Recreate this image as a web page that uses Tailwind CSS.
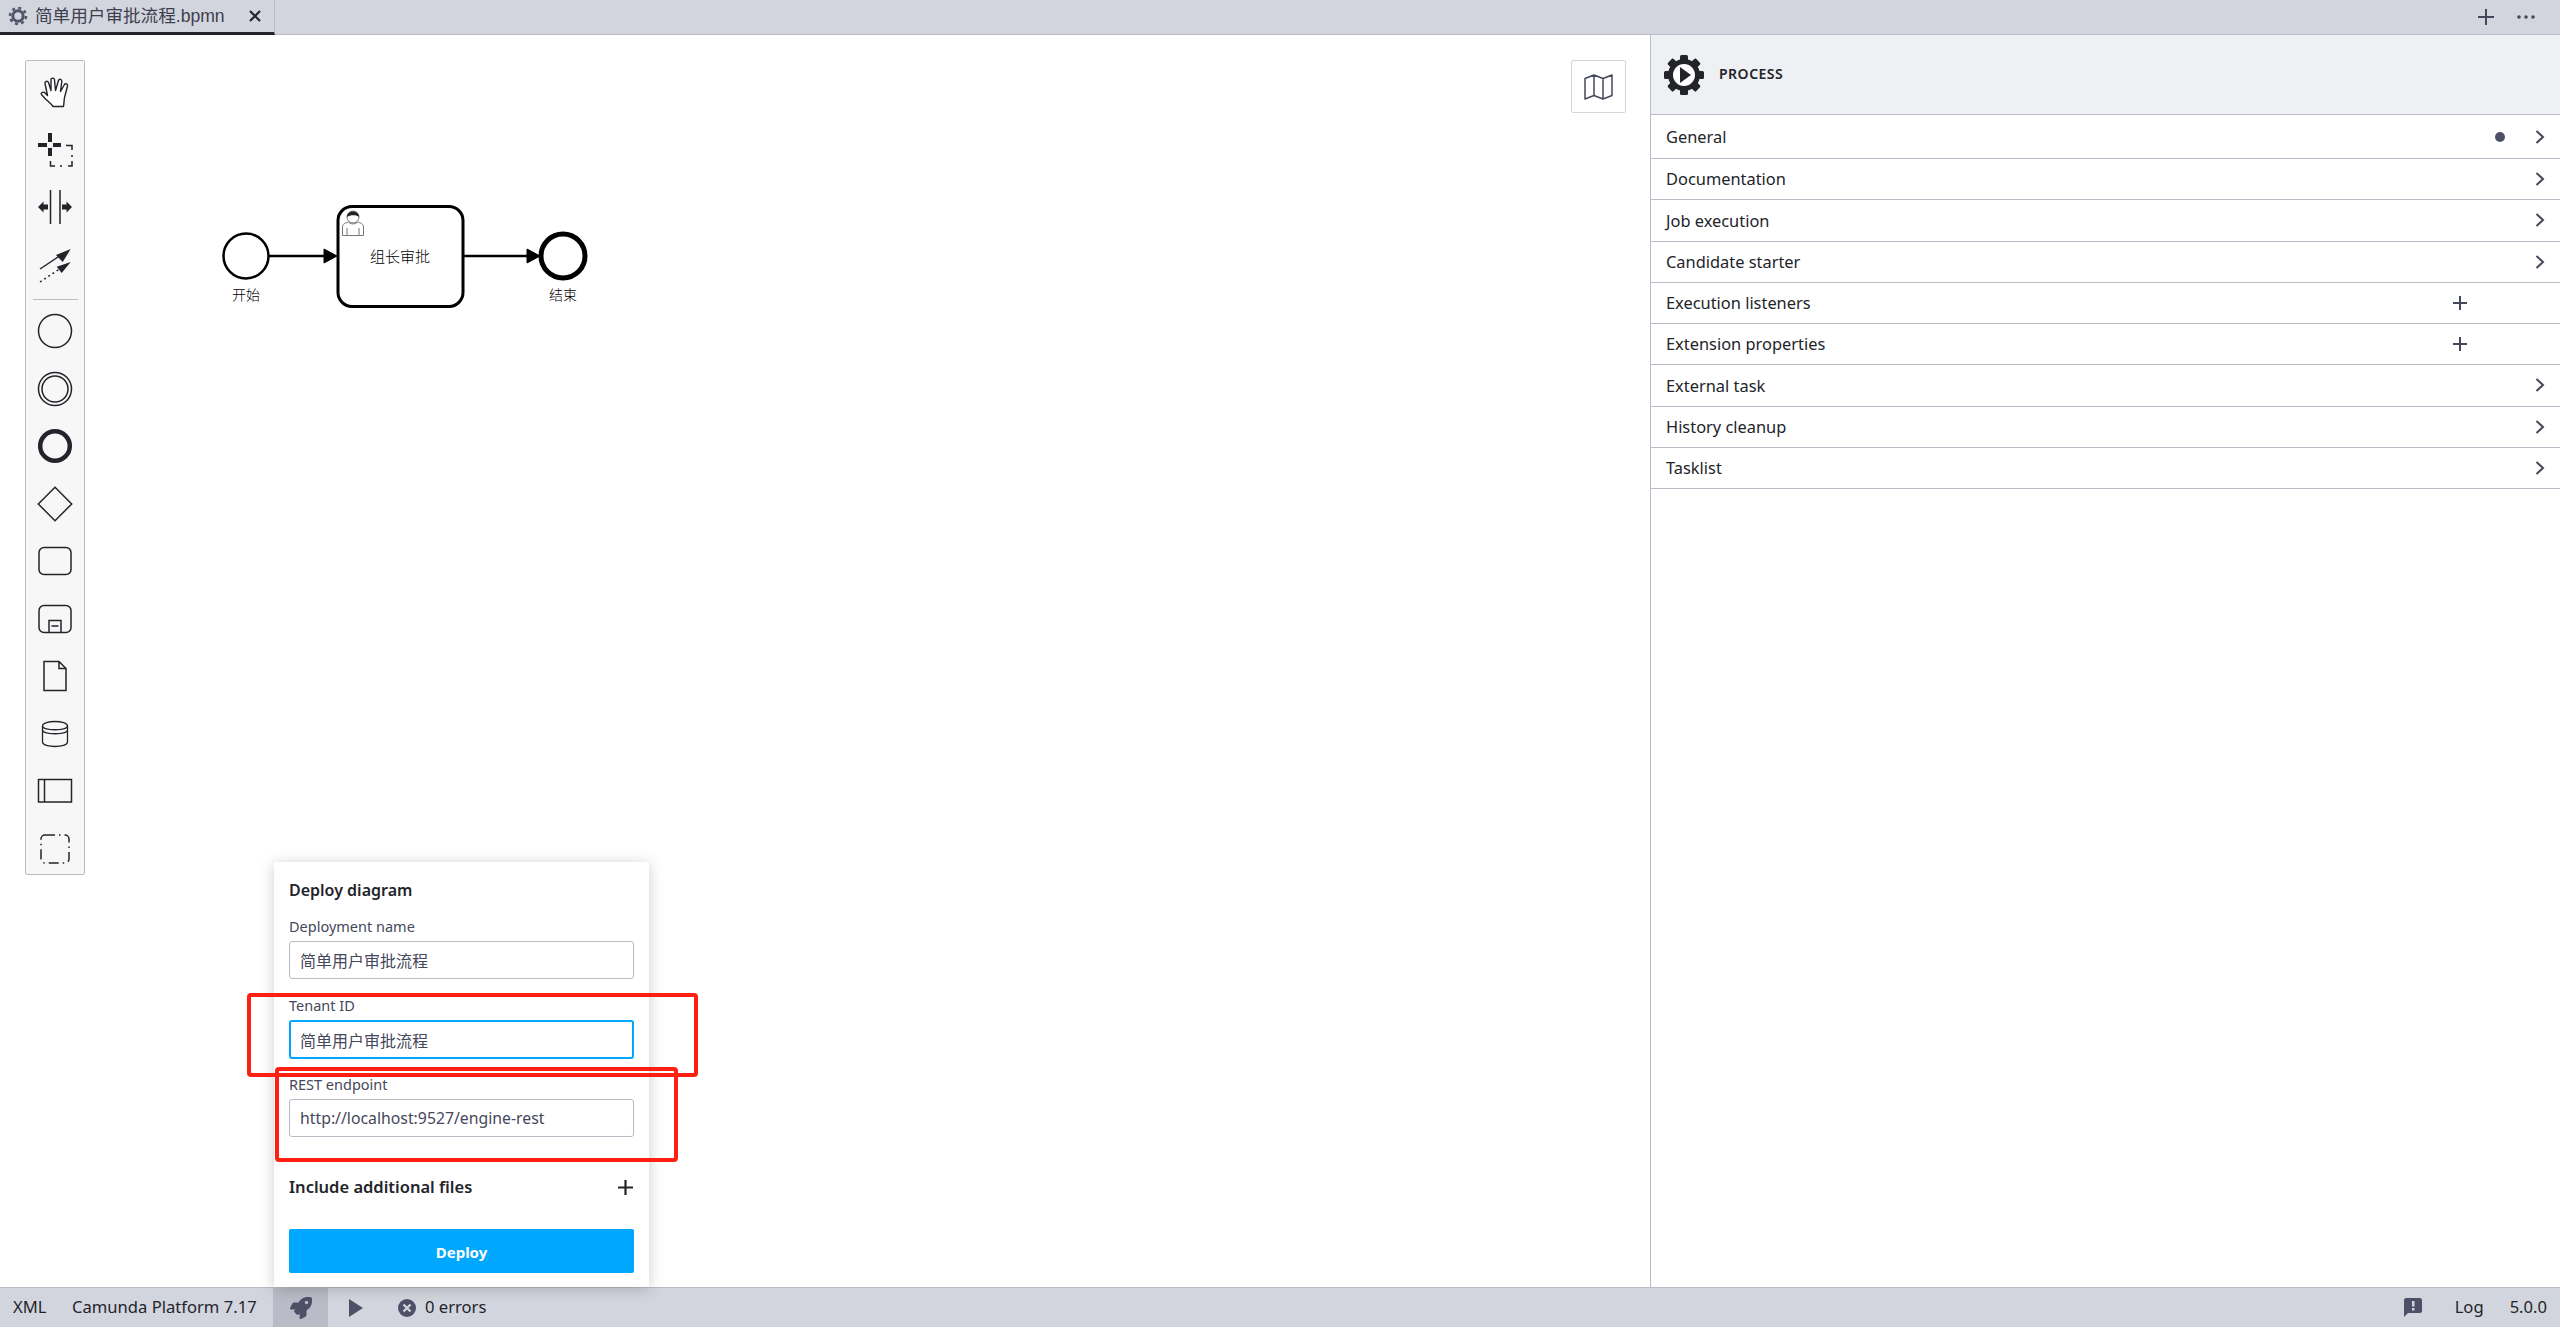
<!DOCTYPE html>
<html lang="en">
<head>
  <meta charset="UTF-8">
  <title>简单用户审批流程.bpmn</title>
  <script src="https://cdn.jsdelivr.net/npm/@tailwindcss/browser@4"></script>
</head>
<body class="h-screen overflow-hidden bg-white text-[#22242a] font-['Noto_Sans','Noto_Sans_CJK_SC',sans-serif]">
<div class="relative flex flex-col h-[1327px] w-[2560px]">

  <!-- tabs -->
  <div class="flex items-stretch justify-between h-[35px] bg-[#d3d5de] border-b border-[#b9bcc6]">
    <div class="flex items-center w-[275px] h-[35px] border-b-[3px] border-r border-b-[#22242a] border-r-[#b9bcc6] pl-[8px] pr-[13px]">
      <svg class="w-[20px] h-[20px] mr-[7px]" viewBox="0 0 20 20">
        <circle cx="10" cy="10" r="5.2" fill="none" stroke="#52566b" stroke-width="3"/>
        <circle cx="10" cy="10" r="8" fill="none" stroke="#52566b" stroke-width="2.6" stroke-dasharray="3 3.28"/>
      </svg>
      <span class="text-[17.6px] text-[#3d404d] font-['Liberation_Sans','Noto_Sans_CJK_SC',sans-serif] whitespace-nowrap">简单用户审批流程.bpmn</span>
      <svg class="ml-auto w-[12px] h-[12px]" viewBox="0 0 12 12"><path d="M1 1L11 11M11 1L1 11" stroke="#22242a" stroke-width="2.2"/></svg>
    </div>
    <div class="flex items-center">
      <svg class="w-[16px] h-[16px] mr-[23px]" viewBox="0 0 16 16"><path d="M8 0V16M0 8H16" stroke="#45485a" stroke-width="2"/></svg>
      <svg class="w-[18px] h-[6px] mr-[25px]" viewBox="0 0 18 6"><circle cx="2" cy="3" r="1.8" fill="#45485a"/><circle cx="9" cy="3" r="1.8" fill="#45485a"/><circle cx="16" cy="3" r="1.8" fill="#45485a"/></svg>
    </div>
  </div>

  <div class="flex flex-1 min-h-0">
    <!-- canvas -->
    <div class="relative flex-1">
      <!-- palette -->
      <div class="absolute left-[25px] top-[25px] w-[60px] h-[815px] bg-[#f7f7f8] border border-[#b9bcc6] rounded-[2px] flex flex-col items-center pt-[2.5px]">
        <div class="h-[57.5px] shrink-0 flex items-center">
          <svg class="w-[40px] h-[40px]" viewBox="0 0 40 40"><path transform="translate(5 5.5)" d="M13 29C11 26 8 24 5 21L1.5 17C.5 15.5 2.5 14 4.5 15L7.5 18L5 6C4.5 3.5 7.5 3 8.5 5L11 13L11 2.5C11 0 14.5 0 14.5 2.5L15.5 13L18.5 3C19.2 1 22 1.5 21.8 4L20.5 14L24.5 7C25.5 5.5 28 6.5 27.5 8.5L24.5 20C24 23 24 26 23.5 29Z" fill="#fff" stroke="#22242a" stroke-width="1.4" stroke-linejoin="round"/></svg>
        </div>
        <div class="h-[57.5px] shrink-0 flex items-center">
          <svg class="w-[40px] h-[40px]" viewBox="0 0 40 40"><path d="M3 15H12M18 15H26M15 3V12M15 18V26" stroke="#22242a" stroke-width="4"/><path d="M31 15.5H37V20M37 25V27M37 31V36H33M27 36H25M20 36H15.5V31" fill="none" stroke="#22242a" stroke-width="1.5"/></svg>
        </div>
        <div class="h-[57.5px] shrink-0 flex items-center">
          <svg class="w-[40px] h-[40px]" viewBox="0 0 40 40"><path d="M15.5 3V37M25 3V37" stroke="#22242a" stroke-width="1.5"/><path d="M3 20L8.500 14.500V17.500H13V22.500H8.500V25.500ZM37 20L31.500 14.500V17.500H27V22.500H31.500V25.500Z" fill="#22242a"/></svg>
        </div>
        <div class="h-[57.5px] shrink-0 flex items-center">
          <svg class="w-[40px] h-[40px]" viewBox="0 0 40 40"><path d="M5 24L26 10" stroke="#22242a" stroke-width="1.5"/><path d="M35.700 4L21 10L27.700 17Z" fill="#22242a"/><path d="M5 37L26 23" stroke="#22242a" stroke-width="1.5" stroke-dasharray="2 3"/><path d="M35.700 17L21.700 21.700L26.700 28Z" fill="#22242a"/></svg>
        </div>
        <div class="w-[45px] h-px shrink-0 bg-[#b9bcc6] mt-[5px] mb-[3px]"></div>
        <div class="h-[57.5px] shrink-0 flex items-center">
          <svg class="w-[40px] h-[40px]" viewBox="0 0 40 40"><circle cx="20" cy="20" r="16.500" fill="none" stroke="#22242a" stroke-width="1.500"/></svg>
        </div>
        <div class="h-[57.5px] shrink-0 flex items-center">
          <svg class="w-[40px] h-[40px]" viewBox="0 0 40 40"><circle cx="20" cy="20" r="16.500" fill="none" stroke="#22242a" stroke-width="1.500"/><circle cx="20" cy="20" r="13" fill="none" stroke="#22242a" stroke-width="1.500"/></svg>
        </div>
        <div class="h-[57.5px] shrink-0 flex items-center">
          <svg class="w-[40px] h-[40px]" viewBox="0 0 40 40"><circle cx="20" cy="20" r="14.800" fill="none" stroke="#22242a" stroke-width="4.500"/></svg>
        </div>
        <div class="h-[57.5px] shrink-0 flex items-center">
          <svg class="w-[40px] h-[40px]" viewBox="0 0 40 40"><path d="M20 3.300L36.700 20L20 36.700L3.300 20Z" fill="none" stroke="#22242a" stroke-width="1.500"/></svg>
        </div>
        <div class="h-[57.5px] shrink-0 flex items-center">
          <svg class="w-[40px] h-[40px]" viewBox="0 0 40 40"><rect x="4" y="6.500" width="32" height="27" rx="5" fill="none" stroke="#22242a" stroke-width="1.500"/></svg>
        </div>
        <div class="h-[57.5px] shrink-0 flex items-center">
          <svg class="w-[40px] h-[40px]" viewBox="0 0 40 40"><rect x="4" y="6.500" width="32" height="27" rx="5" fill="none" stroke="#22242a" stroke-width="1.500"/><path d="M14 33.500V21.500H26V33.500M16.500 27H23.500" fill="none" stroke="#22242a" stroke-width="1.500"/></svg>
        </div>
        <div class="h-[57.5px] shrink-0 flex items-center">
          <svg class="w-[40px] h-[40px]" viewBox="0 0 40 40"><path d="M9 5.500H24L31 12.500V34.500H9ZM24 5.500V12.500H31" fill="none" stroke="#22242a" stroke-width="1.500"/></svg>
        </div>
        <div class="h-[57.5px] shrink-0 flex items-center">
          <svg class="w-[40px] h-[40px]" viewBox="0 0 40 40"><path d="M7.500 12C7.500 6 32.500 6 32.500 12V28C32.500 34 7.500 34 7.500 28ZM7.500 12C7.500 17 32.500 17 32.500 12M7.500 16C7.500 21 32.500 21 32.500 16" fill="none" stroke="#22242a" stroke-width="1.300"/></svg>
        </div>
        <div class="h-[57.5px] shrink-0 flex items-center">
          <svg class="w-[40px] h-[40px]" viewBox="0 0 40 40"><rect x="3.500" y="8.500" width="33" height="22.500" fill="none" stroke="#22242a" stroke-width="1.500"/><path d="M9.500 8.500V31" stroke="#22242a" stroke-width="1.500"/></svg>
        </div>
        <div class="h-[57.5px] shrink-0 flex items-center">
          <svg class="w-[40px] h-[40px]" viewBox="0 0 40 40"><rect x="6" y="6" width="28" height="28" rx="4" fill="none" stroke="#22242a" stroke-width="1.500" stroke-dasharray="10 4 1.500 4"/></svg>
        </div>
      </div>

      <!-- diagram -->
      <svg class="absolute left-[200px] top-[155px] w-[400px] h-[165px]" viewBox="200 190 400 165">
        <circle cx="246" cy="256" r="22.500" fill="#fff" stroke="#000" stroke-width="2.500"/>
        <path d="M269 256H325" stroke="#000" stroke-width="2.500"/>
        <path d="M337 256L324 249V263Z" fill="#000" stroke="#000"/>
        <rect x="338" y="206.500" width="125" height="100" rx="14" fill="#fff" stroke="#000" stroke-width="3"/>
        <path d="M464 256H530" stroke="#000" stroke-width="2.500"/>
        <path d="M540 256L527 249V263Z" fill="#000" stroke="#000"/>
        <circle cx="563" cy="256" r="22" fill="#fff" stroke="#000" stroke-width="5"/>
        <path d="M342.500 235.500V227C342.500 224 345 223 348.500 222C349.500 224.500 356.500 224.500 357.500 222C361 223 363.500 224 363.500 227V235.500ZM347 235.500V228M359 235.500V228" fill="#fff" stroke="#777" stroke-width="1"/>
        <circle cx="353" cy="217" r="6" fill="#fff" stroke="#777" stroke-width="1"/>
        <path d="M347 217C346.500 209.500 359.500 209.500 359 217C357 214.500 350 214.500 347 217Z" fill="#222"/>
        <text x="246" y="300" text-anchor="middle" font-size="14" font-weight="300" fill="#000" font-family="'Noto Sans CJK SC',sans-serif">开始</text>
        <text x="400" y="261.500" text-anchor="middle" font-size="15" font-weight="300" fill="#000" font-family="'Noto Sans CJK SC',sans-serif">组长审批</text>
        <text x="563" y="300" text-anchor="middle" font-size="14" font-weight="300" fill="#000" font-family="'Noto Sans CJK SC',sans-serif">结束</text>
      </svg>

      <!-- minimap toggle -->
      <button class="absolute left-[1571px] top-[25px] w-[55px] h-[53px] flex items-center justify-center bg-white border border-[#d3d5de] rounded-[2px]">
        <svg class="w-[29px] h-[26px]" viewBox="0 0 29 26"><path d="M1 4.500L10 1L19 4.500L28 1V21.500L19 25L10 21.500L1 25ZM10 1V21.500M19 4.500V25" fill="none" stroke="#45485a" stroke-width="1.500" stroke-linejoin="round"/></svg>
      </button>
    </div>

    <!-- properties -->
    <div class="w-[910px] border-l border-[#b9bcc6] bg-white">
      <div class="flex items-center h-[80px] bg-[#eff0f4] border-b border-[#b9bcc6] pl-[12px]">
        <svg class="w-[42px] h-[42px] mr-[14px]" viewBox="0 0 42 42">
          <g fill="#22242a">
            <rect x="17" y="1" width="8" height="40" rx="1.500"/>
            <rect x="17" y="1" width="8" height="40" rx="1.500" transform="rotate(45 21 21)"/>
            <rect x="17" y="1" width="8" height="40" rx="1.500" transform="rotate(90 21 21)"/>
            <rect x="17" y="1" width="8" height="40" rx="1.500" transform="rotate(135 21 21)"/>
            <circle cx="21" cy="21" r="16"/>
          </g>
          <circle cx="21" cy="21" r="11" fill="#fff"/>
          <path d="M17 13L28 21L17 29Z" fill="#22242a"/>
        </svg>
        <span class="text-[14px] font-semibold tracking-[0.5px] -mt-[2px]">PROCESS</span>
      </div>

      <div class="flex items-center h-[44px] border-b border-[#b9bcc6] pl-[15px] pr-[15px] text-[16.4px]">
        <span class="mt-[2px]">General</span>
        <span class="ml-auto w-[10px] h-[10px] rounded-full bg-[#4d5066] mr-[30px]"></span>
        <svg class="w-[10px] h-[14px]" viewBox="0 0 10 14"><path d="M1.500 1L8 7L1.500 13" fill="none" stroke="#45485a" stroke-width="2"/></svg>
      </div>
      <div class="flex items-center justify-between h-[41.25px] border-b border-[#b9bcc6] pl-[15px] pr-[15px] text-[16.4px]">
        <span>Documentation</span>
        <svg class="w-[10px] h-[14px]" viewBox="0 0 10 14"><path d="M1.500 1L8 7L1.500 13" fill="none" stroke="#45485a" stroke-width="2"/></svg>
      </div>
      <div class="flex items-center justify-between h-[41.25px] border-b border-[#b9bcc6] pl-[15px] pr-[15px] text-[16.4px]">
        <span class="mt-[2px]">Job execution</span>
        <svg class="w-[10px] h-[14px]" viewBox="0 0 10 14"><path d="M1.500 1L8 7L1.500 13" fill="none" stroke="#45485a" stroke-width="2"/></svg>
      </div>
      <div class="flex items-center justify-between h-[41.25px] border-b border-[#b9bcc6] pl-[15px] pr-[15px] text-[16.4px]">
        <span class="mt-[2px]">Candidate starter</span>
        <svg class="w-[10px] h-[14px]" viewBox="0 0 10 14"><path d="M1.500 1L8 7L1.500 13" fill="none" stroke="#45485a" stroke-width="2"/></svg>
      </div>
      <div class="flex items-center justify-between h-[41.25px] border-b border-[#b9bcc6] pl-[15px] pr-[93px] text-[16.4px]">
        <span>Execution listeners</span>
        <svg class="w-[14px] h-[14px]" viewBox="0 0 14 14"><path d="M7 0V14M0 7H14" stroke="#45485a" stroke-width="2"/></svg>
      </div>
      <div class="flex items-center justify-between h-[41.25px] border-b border-[#b9bcc6] pl-[15px] pr-[93px] text-[16.4px]">
        <span>Extension properties</span>
        <svg class="w-[14px] h-[14px]" viewBox="0 0 14 14"><path d="M7 0V14M0 7H14" stroke="#45485a" stroke-width="2"/></svg>
      </div>
      <div class="flex items-center justify-between h-[41.25px] border-b border-[#b9bcc6] pl-[15px] pr-[15px] text-[16.4px]">
        <span class="mt-[2px]">External task</span>
        <svg class="w-[10px] h-[14px]" viewBox="0 0 10 14"><path d="M1.500 1L8 7L1.500 13" fill="none" stroke="#45485a" stroke-width="2"/></svg>
      </div>
      <div class="flex items-center justify-between h-[41.25px] border-b border-[#b9bcc6] pl-[15px] pr-[15px] text-[16.4px]">
        <span class="mt-[2px]">History cleanup</span>
        <svg class="w-[10px] h-[14px]" viewBox="0 0 10 14"><path d="M1.500 1L8 7L1.500 13" fill="none" stroke="#45485a" stroke-width="2"/></svg>
      </div>
      <div class="flex items-center justify-between h-[41.25px] border-b border-[#b9bcc6] pl-[15px] pr-[15px] text-[16.4px]">
        <span>Tasklist</span>
        <svg class="w-[10px] h-[14px]" viewBox="0 0 10 14"><path d="M1.500 1L8 7L1.500 13" fill="none" stroke="#45485a" stroke-width="2"/></svg>
      </div>
    </div>
  </div>

  <!-- status bar -->
  <div class="flex items-center h-[40px] bg-[#d3d5de] border-t border-[#b9bcc6] text-[16.6px] text-[#22242a]">
    <span class="ml-[13px] w-[59px]">XML</span>
    <span class="w-[201px] whitespace-nowrap">Camunda Platform 7.17</span>
    <div class="flex items-center justify-center w-[55px] h-[39px] bg-[#b9bcc6]">
      <svg class="w-[22px] h-[22px]" viewBox="0 0 512 512"><path fill="#4d5066" d="M505.050 19.100a15.890 15.890 0 0 0-12.200-12.200C460.650 0 435.460 0 410.360 0c-103.200 0-165.100 55.200-211.290 128H94.870A48 48 0 0 0 52 154.490l-49.420 98.800A24 24 0 0 0 24.070 288h103.770l-22.470 22.470a32 32 0 0 0 0 45.250l50.900 50.910a32 32 0 0 0 45.260 0L224 384.160V488a24 24 0 0 0 34.700 21.490l98.700-49.390a47.910 47.910 0 0 0 26.500-42.900V312.790c72.590-46.300 128-108.400 128-211.090.1-25.200.1-50.400-6.850-82.600zM384 168a40 40 0 1 1 40-40 40 40 0 0 1-40 40z"/></svg>
    </div>
    <svg class="ml-[21px] w-[14px] h-[18px]" viewBox="0 0 14 18"><path d="M0 0L14 9L0 18Z" fill="#4d5066"/></svg>
    <svg class="ml-[35px] w-[18px] h-[18px]" viewBox="0 0 18 18"><circle cx="9" cy="9" r="9" fill="#4d5066"/><path d="M5.500 5.500L12.500 12.500M12.500 5.500L5.500 12.500" stroke="#d3d5de" stroke-width="2.200"/></svg>
    <span class="ml-[9px]">0 errors</span>
    <svg class="ml-auto w-[18px] h-[19px]" viewBox="0 0 18 19"><path d="M2 0H16C17 0 18 1 18 2V13C18 14 17 15 16 15H4L0 19V2C0 1 1 0 2 0Z" fill="#4d5066"/><rect x="8" y="3" width="2.500" height="5.500" fill="#d3d5de"/><rect x="8" y="10" width="2.500" height="2.500" fill="#d3d5de"/></svg>
    <span class="ml-[33px]">Log</span>
    <span class="ml-[26px] mr-[13px]">5.0.0</span>
  </div>

  <!-- deploy overlay -->
  <div class="absolute left-[274px] top-[862px] w-[375px] h-[425px] bg-white shadow-[0_2px_14px_rgba(0,0,0,0.2)] px-[15px] pt-[17px]">
    <h2 class="text-[16px] font-semibold leading-[22px] mb-[16px]">Deploy diagram</h2>
    <label class="block text-[14.5px] text-[#45485a] leading-[18px] mb-[6px]">Deployment name</label>
    <input class="block w-full h-[38px] border border-[#b9bcc6] rounded-[3px] px-[10px] text-[16px] text-[#45485a] mb-[17px] font-['Noto_Sans_CJK_SC',sans-serif]" value="简单用户审批流程">
    <label class="block text-[14.5px] text-[#45485a] leading-[18px] mb-[6px]">Tenant ID</label>
    <input class="block w-full h-[39px] border-2 border-[#00a7ff] rounded-[3px] px-[9px] text-[16px] text-[#45485a] mb-[16px] font-['Noto_Sans_CJK_SC',sans-serif]" value="简单用户审批流程">
    <label class="block text-[14.5px] text-[#45485a] leading-[18px] mb-[6px]">REST endpoint</label>
    <input class="block w-full h-[38px] border border-[#b9bcc6] rounded-[3px] px-[10px] text-[15.8px] text-[#45485a]" value="http://localhost:9527/engine-rest">
    <div class="flex items-center justify-between h-[24px] mt-[38px] mb-[30px]">
      <span class="text-[16.5px] font-semibold">Include additional files</span>
      <svg class="w-[15px] h-[15px] mr-[1px]" viewBox="0 0 15 15"><path d="M7.500 0V15M0 7.500H15" stroke="#22242a" stroke-width="2.200"/></svg>
    </div>
    <button class="block w-full h-[44px] bg-[#00a7ff] rounded-[2px] text-white text-[15px] font-bold pt-[3px]">Deploy</button>
  </div>

  <!-- red annotation boxes -->
  <div class="absolute left-[247px] top-[993px] w-[451px] h-[84px] border-[4px] border-[#ff2012] rounded-[4px] pointer-events-none"></div>
  <div class="absolute left-[275px] top-[1067px] w-[403px] h-[95px] border-[4px] border-[#ff2012] rounded-[4px] pointer-events-none"></div>
</div>
</body>
</html>
